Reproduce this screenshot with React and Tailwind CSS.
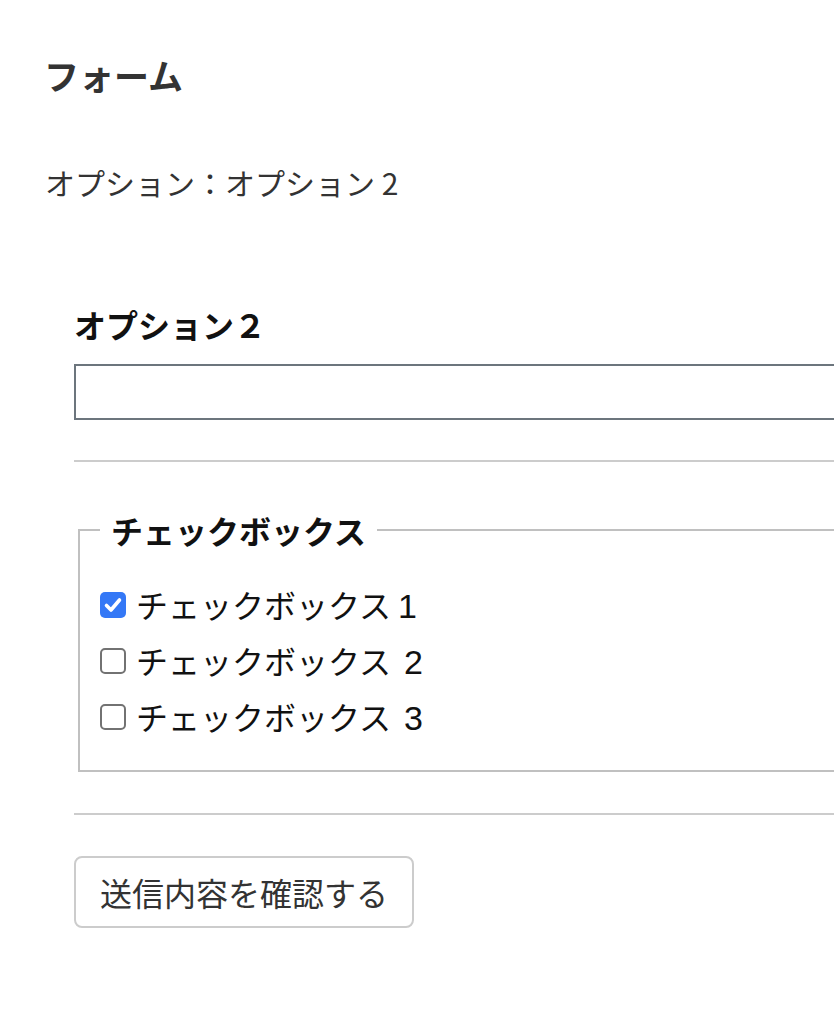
import React from 'react';

const Box = ({ checked }) => {
    if (checked) {
        return (
            <span className="w-[26px] h-[26px] rounded-[5px] bg-[#3478f6] flex items-center justify-center shrink-0">
                <svg width="26" height="26" viewBox="0 0 26 26">
                    <path d="M6.5 13.5 L11 18 L19.5 8" fill="none" stroke="#fff" strokeWidth="3.6" strokeLinecap="round" strokeLinejoin="round" />
                </svg>
            </span>
        );
    }
    return <span className="w-[26px] h-[26px] rounded-[5px] border-2 border-[#727272] bg-white shrink-0"></span>;
};

// digits sit a little apart from the kana, like the reference's latin glyphs
const options = [
    { text: 'チェックボックス', num: '1', gap: 'ml-[7px]', checked: true },
    { text: 'チェックボックス', num: '2', gap: 'ml-[13px]', checked: false },
    { text: 'チェックボックス', num: '3', gap: 'ml-[13px]', checked: false },
];

export default function App() {
    return (
        <div className="w-[834px] h-[1010px] overflow-hidden bg-white font-['Noto_Sans_CJK_JP','Noto_Sans',sans-serif]">
            <div className="pl-[46px] pt-[57px] w-[1000px]">
                <h1 className="-ml-[2px] text-[35px] leading-[35px] font-bold text-[#333]">フォーム</h1>
                <p className="-ml-[1px] mt-[75px] text-[30px] leading-[30px] text-[#333]">オプション：オプション 2</p>

                <form className="ml-[28px] mt-[111px] w-[790px]">
                    <label className="block text-[32px] leading-[32px] font-bold text-[#111]">オプション２</label>
                    <input type="text" className="mt-[24px] block w-full h-[56px] border-2 border-[#6c757d] bg-white outline-none" />

                    <hr className="mt-[40px] border-0 border-t-2 border-[#cccccc]" />

                    <fieldset className="mt-[52px] ml-[4px] border-2 border-[#c0c0c0] px-[20px] pt-[31px] pb-[25px]">
                        <legend className="px-[11px] text-[32px] leading-[32px] font-bold text-[#111]">チェックボックス</legend>
                        {options.map((opt) => (
                            <label key={opt.num} className="h-[56px] flex items-center gap-[10px]">
                                <Box checked={opt.checked} />
                                <span className="text-[32px] leading-[32px] text-[#111]">
                                    {opt.text}
                                    <span className={`${opt.gap} font-['Liberation_Sans',sans-serif] text-[34px]`}>{opt.num}</span>
                                </span>
                            </label>
                        ))}
                    </fieldset>

                    <hr className="mt-[41px] border-0 border-t-2 border-[#cccccc]" />

                    <button type="button" className="mt-[41px] block h-[72px] px-[24px] border-2 border-[#cccccc] rounded-[8px] bg-white text-[32px] leading-[32px] text-[#333]">
                        送信内容を確認する
                    </button>
                </form>
            </div>
        </div>
    );
}
